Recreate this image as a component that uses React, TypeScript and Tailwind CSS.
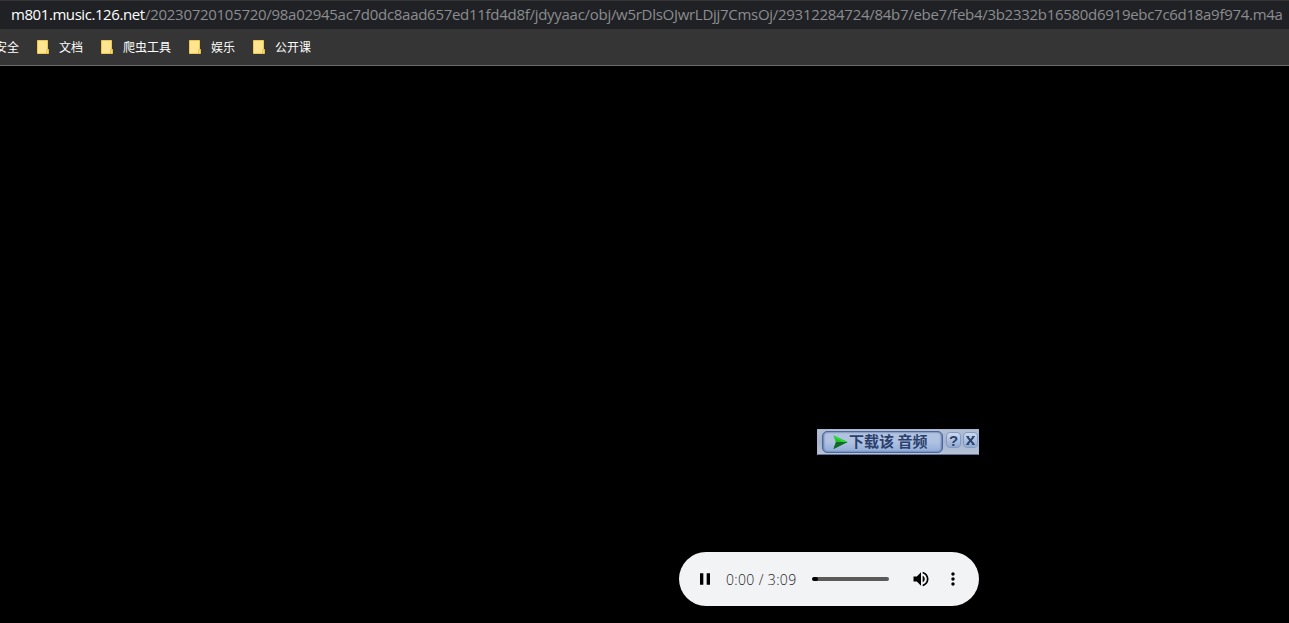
import React from "react";

const folders = [
  { name: "文档", width: "w-16" },
  { name: "爬虫工具", width: "w-[88px]" },
  { name: "娱乐", width: "w-16" },
  { name: "公开课", width: "w-20" },
];

function FolderIcon() {
  return (
    <svg width="12" height="14" viewBox="0 0 12 14" className="shrink-0">
      <path d="M.5.5h10v9h1v4H.5z" fill="#ffe592" stroke="#edc84e" />
      <path d="M9.5 10v3h2v-3z" fill="#ffe592" stroke="#e3b93b" strokeWidth=".8" />
    </svg>
  );
}

function AddressBar() {
  return (
    <div className="flex h-[29px] shrink-0 items-center border-t border-[#353535] bg-[#202124] pb-[2px] pl-[11px] font-['Open_Sans','Noto_Sans',sans-serif] text-[15px] leading-5 whitespace-nowrap">
      <span className="w-[134px] shrink-0 tracking-[-0.43px] text-white">m801.music.126.net</span>
      <span className="tracking-[-0.285px] text-[#8b8d90]">
        /20230720105720/98a02945ac7d0dc8aad657ed11fd4d8f/jdyyaac/obj/w5rDlsOJwrLDjj7CmsOj/29312284724/84b7/ebe7/feb4/3b2332b16580d6919ebc7c6d18a9f974.m4a
      </span>
    </div>
  );
}

function Bookmarks() {
  return (
    <div className="flex h-[37px] shrink-0 items-center border-b border-[#6a6a6a] bg-[#353535] font-['Noto_Sans_CJK_SC',sans-serif] text-xs text-white">
      <span className="-ml-[5px] w-[42px] shrink-0">安全</span>
      {folders.map((f) => (
        <div key={f.name} className={`flex shrink-0 items-center gap-[10px] ${f.width}`}>
          <FolderIcon />
          <span className="whitespace-nowrap">{f.name}</span>
        </div>
      ))}
    </div>
  );
}

function DownloadBar() {
  return (
    <div className="flex h-[26px] w-[162px] items-start border border-[#a9b9d5] border-b-[#61749b] bg-linear-to-b from-[#b4c0d5] via-[#a6b4d0] to-[#b8c4d7] pt-px pl-1">
      <div className="flex h-[22px] w-[121px] items-center rounded-[5px] border border-[#4f6798] bg-linear-to-b from-[#b3c3df] via-[#b0c2e2] to-[#91acd9] pl-[10px] shadow-[inset_1px_0_2px_#6179ab,inset_-1px_0_2px_#6179ab]">
        <svg width="15" height="15" viewBox="0 0 15 15" className="shrink-0">
          <path d="M.5.5 14.5 7 .5 14 3 7z" fill="#159221" />
          <path d="M.5.5 14.5 7H3z" fill="#29df36" />
          <path d="M.5 14 3 7h11.5z" fill="#126828" />
          <path d="M2 3 10 7H3z" fill="#24bd2c" />
        </svg>
        <span className="ml-px pb-[2px] font-['Noto_Sans_CJK_SC',sans-serif] text-[15px] leading-5 font-bold whitespace-nowrap text-[#2b416d]">下载该 音频</span>
      </div>
      <div className="ml-[3px] flex gap-[2px]">
        <SmallButton kind="help" />
        <SmallButton kind="close" />
      </div>
    </div>
  );
}

function SmallButton({ kind }: { kind: "help" | "close" }) {
  return (
    <span className="mt-px flex h-4 w-[15px] shrink-0 items-center justify-center rounded-[4px] border border-[#849bc4] bg-linear-to-b from-[#ccdaed] to-[#91abd4]">
      {kind === "help" ? (
        <span className="font-['Liberation_Sans',sans-serif] text-[15px] leading-[13px] font-bold text-[#2c416b]">?</span>
      ) : (
        <svg width="9" height="9" viewBox="0 0 10 10" className="mr-px shrink-0">
          <path d="M0 .5h3.5M6.5.5H10M0 9.5h3.5M6.5 9.5H10" stroke="#2c416b" />
          <path d="m1.5 1 7 8M8.5 1l-7 8" stroke="#2c416b" strokeWidth="2.2" />
        </svg>
      )}
    </span>
  );
}

function AudioPlayer() {
  return (
    <div className="flex h-[54px] w-[300px] items-center rounded-full bg-[#f1f3f4] pl-4">
      <svg width="20" height="20" viewBox="0 0 24 24" className="shrink-0">
        <path d="M6 19h4V5H6v14zm8-14v14h4V5h-4z" />
      </svg>
      <span className="ml-[11px] w-[86px] pt-[2px] font-['Open_Sans','Noto_Sans',sans-serif] text-sm leading-5 font-light tracking-[0.35px] whitespace-nowrap text-[#202124]">0:00 / 3:09</span>
      <div className="h-1 w-[77px] overflow-hidden rounded-full bg-[#5a5a5a]">
        <div className="h-1 w-[6px] rounded-full bg-black" />
      </div>
      <svg width="20" height="20" viewBox="0 0 24 24" className="ml-[22px] shrink-0">
        <path d="M3 9v6h4l5 5V4L7 9H3zm13.5 3c0-1.77-1.02-3.29-2.5-4.03v8.05c1.48-.73 2.5-2.25 2.5-4.02zM14 3.23v2.06c2.89.86 5 3.54 5 6.71s-2.11 5.85-5 6.71v2.06c4.01-.91 7-4.49 7-8.77s-2.99-7.86-7-8.77z" />
      </svg>
      <svg width="20" height="20" viewBox="0 0 24 24" className="ml-3 shrink-0">
        <path d="M12 8c1.1 0 2-.9 2-2s-.9-2-2-2-2 .9-2 2 .9 2 2 2zm0 2c-1.1 0-2 .9-2 2s.9 2 2 2 2-.9 2-2-.9-2-2-2zm0 6c-1.1 0-2 .9-2 2s.9 2 2 2 2-.9 2-2-.9-2-2-2z" />
      </svg>
    </div>
  );
}

export default function App() {
  return (
    <div className="flex h-screen w-full flex-col overflow-hidden bg-black">
      <AddressBar />
      <Bookmarks />
      <main className="flex flex-1 flex-col items-end justify-end gap-[97px] pr-[310px] pb-[17px]">
        <DownloadBar />
        <AudioPlayer />
      </main>
    </div>
  );
}
